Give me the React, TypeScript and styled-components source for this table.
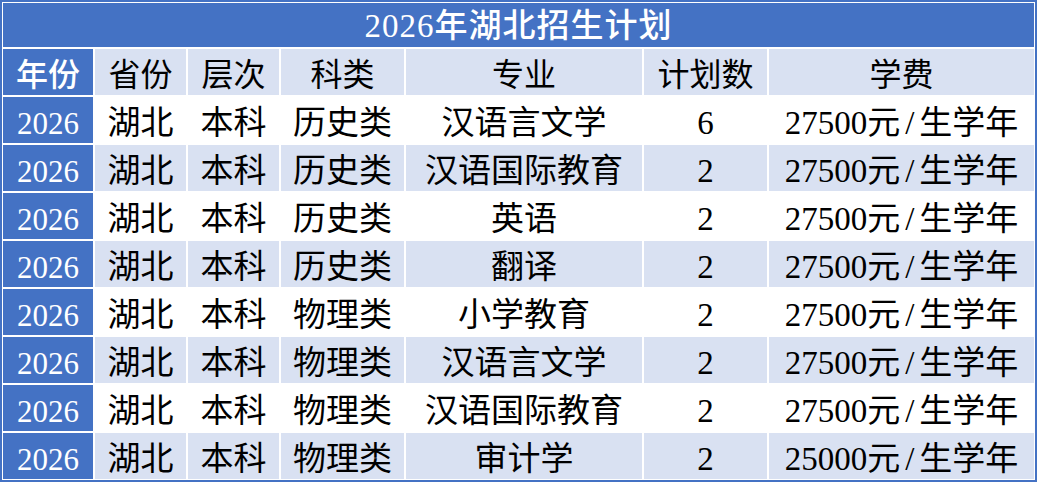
import styled, { createGlobalStyle } from "styled-components";

const BLUE = "#4472c4";
const PALE = "#d9e1f2";

const GlobalStyle = createGlobalStyle`
    html, body {
        margin: 0;
        padding: 0;
        background: #fff;
    }
`;

const Sheet = styled.div`
    box-sizing: border-box;
    display: grid;
    grid-template-columns: 90px 91px 91px 123px 236px 123px 1fr;
    grid-template-rows: 44px repeat(9, 46px);
    gap: 2px;
    width: 1037px;
    height: 482px;
    padding: 1px;
    border: 2px solid ${BLUE};
    background: #fff;
    font-family: "Liberation Serif", "Noto Sans CJK SC", serif;
`;

const Title = styled.div`
    grid-column: 1 / -1;
    display: flex;
    align-items: center;
    justify-content: center;
    background: ${BLUE};
    color: #fff;
    font-size: 33px;
    font-weight: 500;
    letter-spacing: 1px;
    line-height: 1;
    padding-top: 2px;
`;

const HeadCell = styled.div<{ $lead?: boolean }>`
    display: flex;
    align-items: center;
    justify-content: center;
    background: ${(p) => (p.$lead ? BLUE : PALE)};
    color: ${(p) => (p.$lead ? "#fff" : "#000")};
    font-family: "Noto Sans CJK SC", sans-serif;
    font-size: 32px;
    font-weight: ${(p) => (p.$lead ? 500 : 400)};
    line-height: 1;
`;

const Cell = styled.div<{ $lead?: boolean; $shade?: boolean }>`
    display: flex;
    align-items: center;
    justify-content: center;
    padding-top: 6px;
    background: ${(p) => (p.$lead ? BLUE : p.$shade ? PALE : "#fff")};
    color: ${(p) => (p.$lead ? "#fff" : "#000")};
    font-size: ${(p) => (p.$lead ? "31px" : "33px")};
    line-height: 1;
    white-space: nowrap;
`;

const Slash = styled.span`
    margin: 0 5px;
`;

const headers = ["年份", "省份", "层次", "科类", "专业", "计划数", "学费"];

const rows = [
    { subject: "历史类", major: "汉语言文学", count: 6, fee: 27500 },
    { subject: "历史类", major: "汉语国际教育", count: 2, fee: 27500 },
    { subject: "历史类", major: "英语", count: 2, fee: 27500 },
    { subject: "历史类", major: "翻译", count: 2, fee: 27500 },
    { subject: "物理类", major: "小学教育", count: 2, fee: 27500 },
    { subject: "物理类", major: "汉语言文学", count: 2, fee: 27500 },
    { subject: "物理类", major: "汉语国际教育", count: 2, fee: 27500 },
    { subject: "物理类", major: "审计学", count: 2, fee: 25000 },
];

export default function App() {
    return (
        <>
            <GlobalStyle />
            <Sheet>
                <Title>2026年湖北招生计划</Title>
                {headers.map((h, i) => (
                    <HeadCell key={h} $lead={i === 0}>
                        {h}
                    </HeadCell>
                ))}
                {rows.map((r, i) => {
                    const shade = i % 2 === 1;
                    return [
                        <Cell key={`y${i}`} $lead>2026</Cell>,
                        <Cell key={`p${i}`} $shade={shade}>湖北</Cell>,
                        <Cell key={`l${i}`} $shade={shade}>本科</Cell>,
                        <Cell key={`s${i}`} $shade={shade}>{r.subject}</Cell>,
                        <Cell key={`m${i}`} $shade={shade}>{r.major}</Cell>,
                        <Cell key={`c${i}`} $shade={shade}>{r.count}</Cell>,
                        <Cell key={`f${i}`} $shade={shade}>
                            {r.fee}元<Slash>/</Slash>生学年
                        </Cell>,
                    ];
                })}
            </Sheet>
        </>
    );
}
